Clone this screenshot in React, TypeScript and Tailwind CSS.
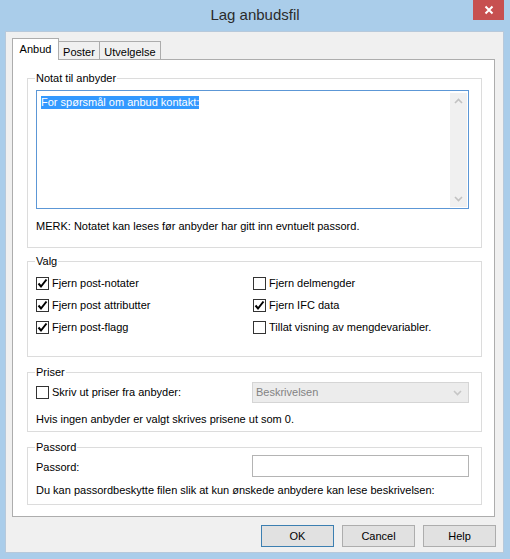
import React from "react";

function Check({ on }: { on?: boolean }) {
  return (
    <span className="w-[13px] h-[13px] border border-[#333333] bg-white flex items-center justify-center shrink-0">
      {on && (
        <svg width="11" height="11" viewBox="0 0 11 11">
          <path d="M1.5 5.5 L4 8.5 L9.5 1.5" fill="none" stroke="#000" strokeWidth="2" />
        </svg>
      )}
    </span>
  );
}

function Option({ on, label }: { on?: boolean; label: string }) {
  return (
    <div className="flex items-center h-[13px] gap-[3px]">
      <Check on={on} />
      <span className="leading-[13px] whitespace-nowrap">{label}</span>
    </div>
  );
}

function Chevron({ up, color }: { up?: boolean; color: string }) {
  return (
    <svg width="9" height="6" viewBox="0 0 9 6">
      <path d={up ? "M1 5 L4.5 1.5 L8 5" : "M1 1 L4.5 4.5 L8 1"} fill="none" stroke={color} strokeWidth="1.6" />
    </svg>
  );
}

function Group({ title, className, children }: { title: string; className: string; children: React.ReactNode }) {
  return (
    <fieldset className={"border border-[#dcdcdc] w-[455px] px-[8px] " + className}>
      <legend className="-ml-[1px] px-[1px] leading-[13px]">{title}</legend>
      {children}
    </fieldset>
  );
}

export default function App() {
  return (
    <div className="w-[510px] h-[559px] bg-[#aacdea] flex flex-col font-['Liberation_Sans',Arial,sans-serif] text-[11px] text-black">
      <div className="h-[31px] relative flex items-center justify-center shrink-0">
        <span className="text-[15px] text-[#2b2b2b] pb-[1px]">Lag anbudsfil</span>
        <div className="absolute right-[6px] top-0 w-[31px] h-[20px] bg-[#c75050] flex items-center justify-center">
          <svg width="10" height="10" viewBox="0 0 10 10">
            <path d="M1.5 1.5 L8.5 8.5 M8.5 1.5 L1.5 8.5" stroke="#fff" strokeWidth="2" />
          </svg>
        </div>
      </div>

      <div className="ml-[5px] w-[499px] h-[522px] border border-[#b7c9db] bg-[#f0f0f0] pl-[6px] pt-[6px]">
        <div className="flex items-end h-[21px]">
          <div className="w-[47px] bg-white border border-b-0 border-[#adadad] relative z-10 -mb-px h-[22px] flex justify-center pt-[4px]">
            <span className="leading-[13px]">Anbud</span>
          </div>
          <div className="w-[41px] h-[18px] bg-[#f0f0f0] border border-b-0 border-l-0 border-[#acacac] flex justify-center pt-[4px]">
            <span className="leading-[13px]">Poster</span>
          </div>
          <div className="w-[61px] h-[18px] bg-[#f0f0f0] border border-b-0 border-l-0 border-[#acacac] flex justify-center pt-[4px]">
            <span className="leading-[13px]">Utvelgelse</span>
          </div>
        </div>

        <div className="w-[483px] h-[458px] bg-white border border-[#adadad] pl-[14px] pt-[12px] flex flex-col">
          <Group title="Notat til anbyder" className="h-[176px]">
            <div className="mt-[5px] w-[433px] h-[119px] border border-[#5c97d6] flex pl-[4px] pt-[3px] pr-[1px] pb-[1px]">
              <div className="flex-1">
                <span className="bg-[#3399ff] text-white leading-[13px] inline-block">For spørsmål om anbud kontakt:</span>
              </div>
              <div className="w-[17px] bg-[#f0f0f0] flex flex-col items-center justify-between py-[5px] -mt-[1px]">
                <Chevron up color="#c2c2c2" />
                <Chevron color="#c2c2c2" />
              </div>
            </div>
            <div className="mt-[11px] leading-[13px]">MERK: Notatet kan leses før anbyder har gitt inn evntuelt passord.</div>
          </Group>

          <Group title="Valg" className="h-[102px] mt-[7px]">
            <div className="mt-[9px] grid grid-cols-[217px_1fr] gap-y-[9px]">
              <Option on label="Fjern post-notater" />
              <Option label="Fjern delmengder" />
              <Option on label="Fjern post attributter" />
              <Option on label="Fjern IFC data" />
              <Option on label="Fjern post-flagg" />
              <Option label="Tillat visning av mengdevariabler." />
            </div>
          </Group>

          <Group title="Priser" className="h-[66px] mt-[9px]">
            <div className="mt-[3px] flex items-center h-[21px]">
              <div className="w-[216px]">
                <Option label="Skriv ut priser fra anbyder:" />
              </div>
              <div className="w-[217px] h-[21px] bg-[#ececec] border border-[#d5d5d5] flex items-center justify-between pl-[3px] pr-[6px] text-[#838383]">
                <span className="leading-[13px]">Beskrivelsen</span>
                <Chevron color="#c6c6c6" />
              </div>
            </div>
            <div className="mt-[10px] leading-[13px]">Hvis ingen anbyder er valgt skrives prisene ut som 0.</div>
          </Group>

          <Group title="Passord" className="h-[64px] mt-[9px]">
            <div className="mt-[1px] flex items-center h-[22px]">
              <div className="w-[216px] leading-[13px] pt-[2px]">Passord:</div>
              <div className="w-[217px] h-[22px] bg-white border border-[#b4b4b4]" />
            </div>
            <div className="mt-[7px] leading-[13px]">Du kan passordbeskytte filen slik at kun ønskede anbydere kan lese beskrivelsen:</div>
          </Group>
        </div>

        <div className="mt-[8px] flex justify-end gap-[8px] pr-[7px]">
          <div className="w-[73px] h-[22px] bg-[#e1e1e1] border border-[#3c7fb1] flex items-center justify-center">OK</div>
          <div className="w-[73px] h-[22px] bg-[#e1e1e1] border border-[#adadad] flex items-center justify-center">Cancel</div>
          <div className="w-[73px] h-[22px] bg-[#e1e1e1] border border-[#adadad] flex items-center justify-center">Help</div>
        </div>
      </div>
    </div>
  );
}
